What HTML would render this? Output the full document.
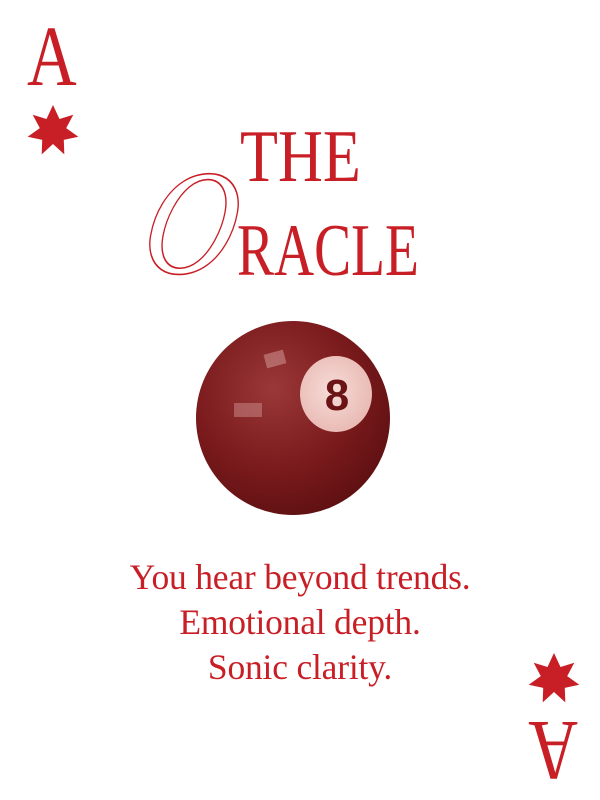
<!DOCTYPE html>
<html><head><meta charset="utf-8"><style>
html,body{margin:0;padding:0;background:#fff;}
body{width:600px;height:800px;position:relative;overflow:hidden;font-family:"Liberation Serif",serif;color:#c81f26;}
.a{position:absolute;font-size:86px;line-height:1;transform-origin:0 0;}
.t{position:absolute;font-size:74px;line-height:1;transform-origin:0 0;}
.o{position:absolute;font-family:"Liberation Serif",serif;font-style:italic;font-size:150px;line-height:1;color:transparent;-webkit-text-stroke:1.6px #c81f26;transform:scaleX(0.85) skewX(-12deg);transform-origin:0 0;}
.txt{position:absolute;left:0;width:600px;text-align:center;font-size:35.5px;line-height:45px;top:555px;letter-spacing:-0.2px;}
</style></head><body>
<div class="a" style="left:27px;top:13px;transform:scaleX(0.8);">A</div>
<svg style="position:absolute;left:0;top:0" width="600" height="800">
<defs><polygon id="st" points="0,-26 6.5,-12 20.3,-16.2 13.2,-2.9 25.3,5.8 10.8,8.9 11.3,23.4 0,13 -11.3,23.4 -10.8,8.9 -25.3,5.8 -13.2,-2.9 -20.3,-16.2 -6.5,-12"/></defs>
<use href="#st" x="53" y="131" fill="#c81f26"/>
<use href="#st" x="554" y="679" fill="#c81f26"/>
<defs>
<radialGradient id="b" cx="0.4" cy="0.35" r="0.7">
<stop offset="0" stop-color="#9a3838"/><stop offset="0.6" stop-color="#7a1a1c"/><stop offset="1" stop-color="#5e1012"/></radialGradient>
<radialGradient id="w" cx="0.45" cy="0.45" r="0.6">
<stop offset="0" stop-color="#f7dcd8"/><stop offset="1" stop-color="#e8b8b2"/></radialGradient>
</defs>
<circle cx="293" cy="418" r="97" fill="url(#b)"/>
<ellipse cx="336" cy="394" rx="36" ry="38" fill="url(#w)"/>
<text x="337" y="410" font-family="Liberation Sans,sans-serif" font-weight="bold" font-size="44" fill="#6a1416" text-anchor="middle">8</text>
<rect x="265" y="352" width="20" height="14" fill="#d8a0a0" opacity="0.5" transform="rotate(-15 275 359)"/>
<rect x="234" y="403" width="28" height="14" fill="#d49a9a" opacity="0.45"/>
</svg>
<div class="t" style="left:240px;top:120px;transform:scaleX(0.84);">THE</div>
<div class="o" style="left:160px;top:148px;">O</div>
<div class="t" style="left:237px;top:214px;transform:scaleX(0.75);">RACLE</div>
<div class="txt">You hear beyond trends.<br>Emotional depth.<br>Sonic clarity.</div>
<div class="a" style="left:578px;top:794px;transform:rotate(180deg) scaleX(0.8);">A</div>
</body></html>
